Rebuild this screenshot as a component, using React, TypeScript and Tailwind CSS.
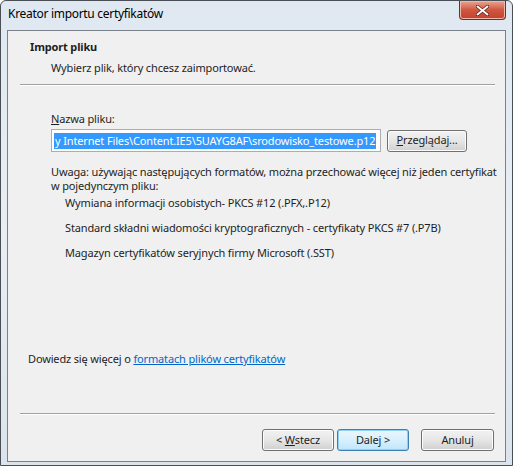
import React from "react";

const font = { fontFamily: '"Noto Sans", "Open Sans", sans-serif' };

function WinButton({
  children,
  focused = false,
  className = "",
}: {
  children: React.ReactNode;
  focused?: boolean;
  className?: string;
}) {
  return (
    <div
      className={
        "flex h-[22px] items-center justify-center rounded-[3px] border text-[11px] text-[#1e1e1e] " +
        (focused
          ? "border-[#3c7fb1] bg-gradient-to-b from-[#eaf6fd] via-[#d9f0fc] to-[#bee6fd] shadow-[inset_0_0_0_1px_#8fd0f5]"
          : "border-[#707070] bg-gradient-to-b from-[#f2f2f2] via-[#e6e6e6] to-[#d0d0d0] shadow-[inset_0_0_0_1px_#fcfcfc]") +
        " " +
        className
      }
    >
      {children}
    </div>
  );
}

export default function App() {
  return (
    <div
      className="flex h-[466px] w-[513px] flex-col overflow-hidden rounded-t-[6px] border border-[#4a4f55] bg-gradient-to-b from-[#dfe8f1] via-[#e8eef4] to-[#dbe4ec] text-[11px] tracking-[-0.15px] text-[#1e1e1e]"
      style={font}
    >
      {/* Title bar */}
      <div className="flex h-[29px] shrink-0 items-start justify-between">
        <p className="pl-[7px] pt-[5px] text-[12px] leading-[16px] tracking-[-0.3px] text-black">
          Kreator importu certyfikatów
        </p>
        <div className="mr-[6px] flex h-[19px] w-[47px] items-center justify-center rounded-b-[4px] border border-t-0 border-[#7a2a22] bg-gradient-to-b from-[#e8a493] via-[#d0553f] to-[#c4412d] shadow-[inset_0_0_0_1px_#f0b8a8]">
          <svg width="13" height="11" viewBox="0 0 13 11">
            <path
              d="M1.5 1.5 L11.5 9.5 M11.5 1.5 L1.5 9.5"
              stroke="#5a1a12"
              strokeWidth="3.4"
              strokeLinecap="round"
            />
            <path
              d="M1.5 1.5 L11.5 9.5 M11.5 1.5 L1.5 9.5"
              stroke="#ffffff"
              strokeWidth="2"
              strokeLinecap="round"
            />
          </svg>
        </div>
      </div>

      {/* Client area */}
      <div className="mx-[6px] mb-[3px] flex flex-1 flex-col border border-[#7b8188] bg-[#f0f0f0]">
        {/* Header */}
        <div className="pl-[22px] pt-[8px]">
          <p className="font-bold leading-[15px]">Import pliku</p>
          <p className="pl-[21px] pt-[6px] leading-[15px]">
            Wybierz plik, który chcesz zaimportować.
          </p>
        </div>
        <div className="ml-[12px] mr-[10px] mt-[9px] h-px bg-[#a0a0a0] shadow-[0_1px_0_#ffffff]" />

        {/* Body */}
        <div className="pl-[43px] pt-[26px]">
          <p className="leading-[15px]">
            <span className="underline">N</span>azwa pliku:
          </p>
          <div className="mt-[3px] flex items-center gap-[6px]">
            <div className="flex h-[23px] w-[330px] items-center overflow-hidden border border-[#abadb3] bg-white pl-[2px]">
              <span className="whitespace-nowrap bg-[#3399ff] px-[1px] leading-[16px] text-white">
                y Internet Files\Content.IE5\5UAYG8AF\srodowisko_testowe.p12
              </span>
            </div>
            <WinButton className="w-[80px]">
              <span>
                <span className="underline">P</span>rzeglądaj...
              </span>
            </WinButton>
          </div>

          <p className="mt-[13px] leading-[14px]">
            Uwaga: używając następujących formatów, można przechować więcej niż jeden certyfikat w
            pojedynczym pliku:
          </p>
          <div className="flex flex-col gap-[10px] pl-[14px] pt-[2px] leading-[15px]">
            <p>Wymiana informacji osobistych- PKCS #12 (.PFX,.P12)</p>
            <p>Standard składni wiadomości kryptograficznych - certyfikaty PKCS #7 (.P7B)</p>
            <p>Magazyn certyfikatów seryjnych firmy Microsoft (.SST)</p>
          </div>
        </div>

        <div className="flex-1" />

        <p className="pl-[20px] leading-[15px]">
          Dowiedz się więcej o{" "}
          <span className="text-[#0066cc] underline">formatach plików certyfikatów</span>
        </p>

        <div className="ml-[12px] mr-[10px] mt-[47px] h-px bg-[#a0a0a0] shadow-[0_1px_0_#ffffff]" />

        {/* Buttons */}
        <div className="flex justify-end pb-[10px] pr-[11px] pt-[15px]">
          <WinButton className="w-[72px]">
            <span>
              &lt; <span className="underline">W</span>stecz
            </span>
          </WinButton>
          <WinButton focused className="ml-[3px] w-[72px]">
            Dalej &gt;
          </WinButton>
          <WinButton className="ml-[12px] w-[73px]">Anuluj</WinButton>
        </div>
      </div>
    </div>
  );
}
